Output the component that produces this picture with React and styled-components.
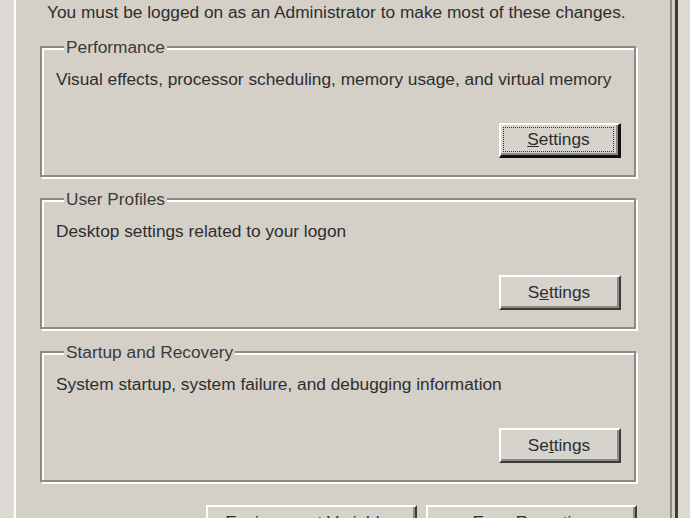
import React from 'react';
import styled, { createGlobalStyle } from 'styled-components';

const GlobalStyle = createGlobalStyle`
    html, body {
        margin: 0;
        padding: 0;
        background: #dcd9d3;
        overflow: hidden;
    }
    body {
        font-family: "Liberation Sans", Arial, sans-serif;
    }
`;

const Screen = styled.div`
    display: flex;
    width: 690px;
    height: 518px;
    padding-left: 14px;
    box-sizing: border-box;
    overflow: hidden;
    background: #dcd9d3;
`;

const TabPage = styled.div`
    display: flex;
    flex-direction: column;
    width: 664px;
    min-height: 560px;
    box-sizing: border-box;
    padding: 2px 0 0 24px;
    background: #d4d0c8;
    border-left: 2px solid #ffffff;
    border-right: 3px solid #3c3b39;
    box-shadow: inset -3px 0 0 #d4d0c8, inset -5px 0 0 #8c8a85;
    color: #2e2e2e;
    font-size: 17.3px;
    line-height: 20px;
`;

const Notice = styled.div`
    margin-left: 7px;
    white-space: nowrap;
`;

const Group = styled.fieldset`
    width: 596px;
    height: 140px;
    box-sizing: border-box;
    margin: ${props => props.$gap}px 0 0 0;
    padding: 0 13px 0 14px;
    border: 2px solid #8c8a85;
    box-shadow: inset 2px 2px 0 #ffffff, 2px 2px 0 #ffffff;
    display: flex;
    flex-direction: column;
`;

const Legend = styled.legend`
    margin-left: 8px;
    padding: 0 2px;
    background: #d4d0c8;
    color: #3a3a3a;
    white-space: nowrap;
`;

const Description = styled.div`
    margin-top: 12px;
    white-space: nowrap;
`;

const Button = styled.button`
    display: flex;
    align-items: center;
    justify-content: center;
    width: ${props => props.$wide ? '211px' : '122px'};
    height: 35px;
    box-sizing: border-box;
    padding: 0;
    font-family: inherit;
    font-size: 17.3px;
    color: #2e2e2e;
    background: #d6d3cd;
    border-style: solid;
    border-width: ${props => props.$focused ? '2px 3px 3px 2px' : '2px'};
    border-color: ${props => props.$focused
        ? '#ffffff #111 #111 #ffffff'
        : '#ffffff #3c3b39 #3c3b39 #ffffff'};
    box-shadow: inset -2px -2px 0 #8c8a85;
    cursor: default;
`;

const FocusRing = styled.span`
    display: flex;
    align-items: center;
    justify-content: center;
    align-self: stretch;
    flex: 1;
    margin: 2px 4px 3px 2px;
    border: ${props => props.$show ? '1px dotted #333' : '1px solid transparent'};
`;

const ButtonRow = styled.div`
    display: flex;
    justify-content: flex-end;
    gap: 9px;
    width: ${props => props.$width ? `${props.$width}px` : 'auto'};
    margin-top: ${props => props.$top || 0}px;
`;

const Key = styled.span`
    text-decoration: underline;
`;

function Accel({ text, at }) {
    return (
        <>
            {text.slice(0, at)}
            <Key>{text[at]}</Key>
            {text.slice(at + 1)}
        </>
    );
}

const groups = [
    { title: 'Performance', text: 'Visual effects, processor scheduling, memory usage, and virtual memory', key: 0, gap: 15, focused: true },
    { title: 'User Profiles', text: 'Desktop settings related to your logon', key: 1, gap: 12 },
    { title: 'Startup and Recovery', text: 'System startup, system failure, and debugging information', key: 2, gap: 13 },
];

export default function App() {
    return (
        <>
            <GlobalStyle />
            <Screen>
                <TabPage>
                    <Notice>You must be logged on as an Administrator to make most of these changes.</Notice>
                    {groups.map(g => (
                        <Group key={g.title} $gap={g.gap}>
                            <Legend>{g.title}</Legend>
                            <Description>{g.text}</Description>
                            <ButtonRow $top={34}>
                                <Button $focused={g.focused}>
                                    <FocusRing $show={g.focused}>
                                        <Accel text="Settings" at={g.key} />
                                    </FocusRing>
                                </Button>
                            </ButtonRow>
                        </Group>
                    ))}
                    <ButtonRow $top={23} $width={597}>
                        <Button $wide><Accel text="Environment Variables" at={1} /></Button>
                        <Button $wide><Accel text="Error Reporting" at={1} /></Button>
                    </ButtonRow>
                </TabPage>
            </Screen>
        </>
    );
}
